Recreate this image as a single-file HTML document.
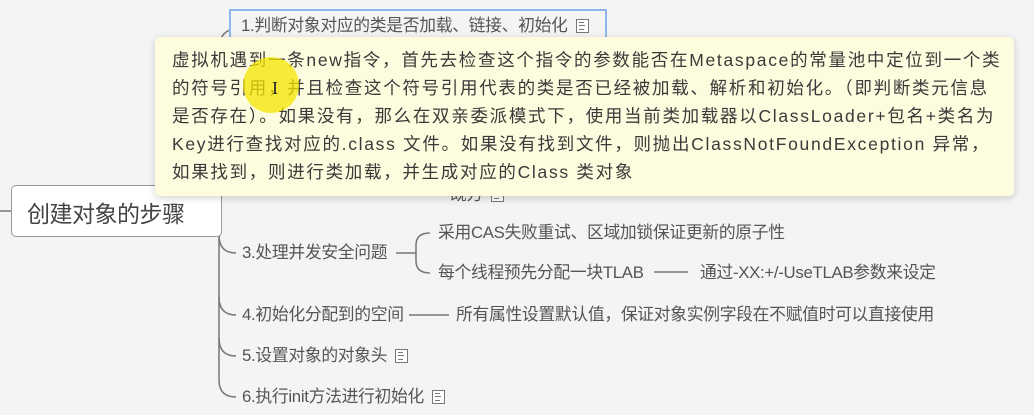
<!DOCTYPE html>
<html><head><meta charset="utf-8">
<style>
html,body{margin:0;padding:0;}
body{width:1034px;height:415px;background:#f3f4f3;position:relative;overflow:hidden;font-family:"Liberation Sans","Noto Sans CJK SC",sans-serif;color:#555;}
.t{position:absolute;font-size:16.8px;white-space:nowrap;line-height:20px;letter-spacing:-0.3px;}
.ic{display:inline-block;width:13px;height:14px;border:1.5px solid #777;box-sizing:border-box;vertical-align:-2px;margin-left:8px;position:relative;background:#fff;}
.ic:before{content:"";position:absolute;left:2px;top:2px;width:5px;height:6px;border-top:1px solid #777;border-bottom:1px solid #777;}
.ic:after{content:"";position:absolute;left:2px;top:5px;width:6px;border-top:1px solid #777;}
#tip{position:absolute;left:155px;top:37px;width:859px;height:159px;background:#fefcde;border-radius:5px;box-shadow:0 2px 8px rgba(0,0,0,.18);}
#tip div{position:absolute;left:17px;font-size:17.5px;line-height:20px;white-space:nowrap;color:#3a3a3a;letter-spacing:1.7px;}
</style></head><body>
<svg width="1034" height="415" style="position:absolute;left:0;top:0">
<g fill="none" stroke="#777" stroke-width="1.5">
<line x1="0" y1="211" x2="11" y2="211"/>
<line x1="222" y1="211" x2="217" y2="211"/>
<path d="M230 30 Q219 34 219 50 L219 380 Q219 397 236 397"/>
<path d="M219 235 Q219 253 236 253"/>
<path d="M219 297 Q219 315 236 315"/>
<path d="M219 338 Q219 356 236 356"/>
<line x1="396" y1="253" x2="416" y2="253"/>
<path d="M430 233 Q416 233 416 245 L416 261 Q416 273 430 273"/>
<line x1="654" y1="272" x2="688" y2="272"/>
<line x1="409" y1="315" x2="449" y2="315"/>
</g>
</svg>
<div style="position:absolute;left:229px;top:9px;width:378px;height:31px;border:2px solid #8fb6ea;box-sizing:border-box;"></div>
<div class="t" style="left:241px;top:16px;">1.判断对象对应的类是否加载、链接、初始化<span class="ic"></span></div>
<div class="t" style="left:450px;top:185px;">既方<span class="ic"></span></div>
<div style="position:absolute;left:11px;top:185px;width:211px;height:52px;border:1.5px solid #999;border-radius:5px;background:#fff;box-sizing:border-box;"></div>
<div class="t" style="left:27px;top:200px;font-size:23px;line-height:28px;color:#444;letter-spacing:-0.5px;">创建对象的步骤</div>
<div class="t" style="left:242px;top:243px;">3.处理并发安全问题</div>
<div class="t" style="left:438px;top:223px;">采用CAS失败重试、区域加锁保证更新的原子性</div>
<div class="t" style="left:438px;top:263px;">每个线程预先分配一块TLAB</div>
<div class="t" style="left:700px;top:263px;">通过-XX:+/-UseTLAB参数来设定</div>
<div class="t" style="left:242px;top:305px;">4.初始化分配到的空间</div>
<div class="t" style="left:456px;top:305px;">所有属性设置默认值，保证对象实例字段在不赋值时可以直接使用</div>
<div class="t" style="left:242px;top:346px;">5.设置对象的对象头<span class="ic"></span></div>
<div class="t" style="left:242px;top:387px;">6.执行init方法进行初始化<span class="ic"></span></div>
<div id="tip">
<div style="top:13px">虚拟机遇到一条new指令，首先去检查这个指令的参数能否在Metaspace的常量池中定位到一个类</div>
<div style="top:41px">的符号引用，并且检查这个符号引用代表的类是否已经被加载、解析和初始化。（即判断类元信息</div>
<div style="top:69px">是否存在）。如果没有，那么在双亲委派模式下，使用当前类加载器以ClassLoader+包名+类名为</div>
<div style="top:97px">Key进行查找对应的.class 文件。如果没有找到文件，则抛出ClassNotFoundException 异常，</div>
<div style="top:125px">如果找到，则进行类加载，并生成对应的Class 类对象</div>
</div>
<div style="position:absolute;left:243px;top:57px;width:56px;height:56px;border-radius:50%;background:rgba(245,230,0,.75);"></div>
<div style="position:absolute;left:272px;top:78px;font-size:18px;color:#222;font-family:'Liberation Serif',serif;">I</div>
</body></html>
